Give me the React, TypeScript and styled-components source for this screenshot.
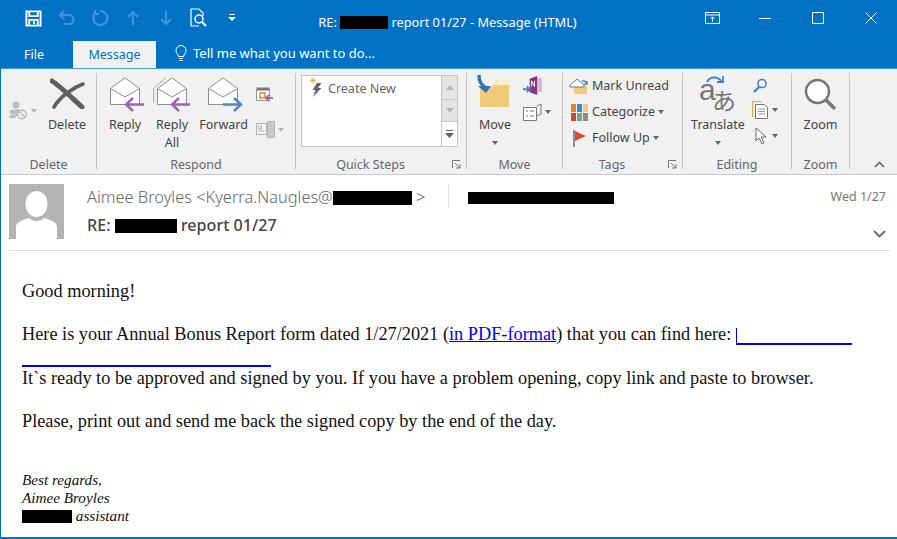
import React from "react";
import styled, { createGlobalStyle } from "styled-components";

const GlobalStyle = createGlobalStyle`
  html, body {
    margin: 0;
    padding: 0;
    background: #ffffff;
  }
  * {
    box-sizing: border-box;
  }
`;

const BLUE = "#0072c6";
const UI_FONT = `"Noto Sans", "Open Sans", sans-serif`;

const Window = styled.div`
  width: 897px;
  height: 539px;
  display: flex;
  flex-direction: column;
  background: #fff;
  border-left: 1px solid ${BLUE};
  border-bottom: 2px solid ${BLUE};
  font-family: ${UI_FONT};
  overflow: hidden;
`;

/* title bar */
const TitleBar = styled.div`
  height: 40px;
  flex: none;
  display: grid;
  grid-template-columns: 300px 1fr 300px;
  align-items: center;
  background: ${BLUE};
  color: #fff;
  margin-left: -1px;
`;

const QuickAccess = styled.div`
  display: flex;
  align-items: center;
  padding: 0 0 4px 17px;
`;

const QatCell = styled.div`
  width: 33px;
  display: flex;
  justify-content: center;
  align-items: center;
`;

const TitleText = styled.div`
  font-size: 12.8px;
  text-align: center;
  white-space: nowrap;
  padding: 3px 2px 0 0;
`;

const WindowControls = styled.div`
  display: flex;
  justify-content: flex-end;
  align-items: center;
  padding: 0 20px 4px 0;
  gap: 41px;
`;

const Redact = styled.span<{ $w: number; $h?: number }>`
  display: inline-block;
  width: ${(p) => p.$w}px;
  height: ${(p) => p.$h ?? 13}px;
  background: #000;
  vertical-align: -2px;
`;

/* tab row */
const TabRow = styled.div`
  height: 28px;
  flex: none;
  display: flex;
  align-items: stretch;
  background: ${BLUE};
  margin-left: -1px;
  color: #fff;
  font-size: 12.5px;
`;

const FileTab = styled.div`
  width: 73px;
  padding: 6px 0 0 24px;
`;

const MessageTab = styled.div`
  width: 83px;
  margin-top: 1px;
  background: #f1f1f1;
  color: ${BLUE};
  text-align: center;
  padding-top: 5px;
`;

const TellMe = styled.div`
  display: flex;
  align-items: center;
  gap: 5px;
  padding-left: 18px;
  height: 26px;
  font-size: 13px;
`;

/* ribbon */
const Ribbon = styled.div`
  height: 107px;
  flex: none;
  display: flex;
  background: #f1f1f1;
  border-top: 1px solid #3f9ad8;
  border-bottom: 1px solid #c9c9c9;
  color: #444;
  font-size: 12.5px;
`;

const Group = styled.div<{ $w: number }>`
  width: ${(p) => p.$w}px;
  flex: none;
  display: flex;
  flex-direction: column;
`;

const GroupBody = styled.div<{ $pad?: number }>`
  flex: 1;
  min-height: 0;
  display: flex;
  align-items: flex-start;
  padding: 5px 0 0 ${(p) => p.$pad ?? 0}px;
`;

const GroupLabel = styled.div<{ $launcher?: boolean }>`
  position: relative;
  height: 20px;
  flex: none;
  padding-right: ${(p) => (p.$launcher ? 21 : 0)}px;
  text-align: center;
  font-size: 12.5px;
  line-height: 21px;
  color: #666;
`;

const Launcher = styled.svg`
  position: absolute;
  right: 5px;
  top: 6px;
`;

const Separator = styled.div`
  width: 1px;
  flex: none;
  margin: 4px 0 5px;
  background: #c6c6c6;
`;

const LargeButton = styled.div<{ $w: number }>`
  width: ${(p) => p.$w}px;
  flex: none;
  display: flex;
  flex-direction: column;
  align-items: center;
  text-align: center;
  line-height: 18px;
  white-space: nowrap;
`;

const LargeIcon = styled.div<{ $nudge?: number }>`
  height: 42px;
  display: flex;
  align-items: flex-start;
  justify-content: center;
  padding-left: ${(p) => p.$nudge ?? 0}px;
`;

const SmallColumn = styled.div<{ $gap: number; $top?: number; $left?: number }>`
  display: flex;
  flex-direction: column;
  gap: ${(p) => p.$gap}px;
  padding-top: ${(p) => p.$top ?? 0}px;
  margin-left: ${(p) => p.$left ?? 0}px;
`;

const SmallRow = styled.div`
  display: flex;
  align-items: center;
  gap: 3px;
  line-height: 18px;
  white-space: nowrap;
`;

const IconSlot = styled.span<{ $w: number }>`
  width: ${(p) => p.$w}px;
  flex: none;
  display: flex;
  align-items: center;
  justify-content: center;

  svg {
    flex: none;
  }
`;

const CaretShape = styled.span<{ $dim?: boolean }>`
  display: inline-block;
  width: 0;
  height: 0;
  border-left: 3.5px solid transparent;
  border-right: 3.5px solid transparent;
  border-top: 4px solid ${(p) => (p.$dim ? "#b5b5b5" : "#666")};
`;

const CaretLine = styled.div`
  height: 18px;
  display: flex;
  align-items: center;
  justify-content: center;
`;

/* quick steps */
const QuickBox = styled.div`
  width: 157px;
  height: 72px;
  margin: 1px 0 0 5px;
  display: flex;
  background: #fff;
  border: 1px solid #c6c6c6;
`;

const QuickList = styled.div`
  flex: 1;
  display: flex;
  align-items: flex-start;
  gap: 5px;
  padding: 2px 0 0 6px;
  line-height: 22px;
  color: #666;
`;

const QuickScroll = styled.div`
  width: 16px;
  display: flex;
  flex-direction: column;
  border-left: 1px solid #c6c6c6;
`;

const ScrollButton = styled.div<{ $h: number; $on?: boolean }>`
  height: ${(p) => p.$h}px;
  flex: none;
  display: flex;
  align-items: center;
  justify-content: center;
  background: ${(p) => (p.$on ? "#fff" : "#e4e4e4")};
  border-bottom: ${(p) => (p.$on ? "none" : "1px solid #c6c6c6")};
`;

const Collapse = styled.div`
  flex: 1;
  display: flex;
  align-items: flex-end;
  justify-content: flex-end;
  padding: 0 12px 6px 0;
`;

/* message header */
const Header = styled.div`
  height: 76px;
  flex: none;
  margin: 0 7px 0 8px;
  display: flex;
  gap: 23px;
  padding-top: 9px;
  border-bottom: 1px solid #dcdcdc;
`;

const Avatar = styled.div`
  width: 55px;
  height: 55px;
  flex: none;
  background: #b4b4b4;
`;

const HeaderMain = styled.div`
  flex: 1;
  display: flex;
  flex-direction: column;
  min-width: 0;
`;

const HeaderTop = styled.div`
  display: flex;
  align-items: flex-start;
  height: 24px;
`;

const Sender = styled.div`
  width: 361px;
  flex: none;
  font-size: 16.4px;
  font-weight: 300;
  line-height: 25px;
  color: #666;
  white-space: nowrap;
`;

const Recipients = styled.div`
  flex: 1;
  height: 24px;
  padding: 8px 0 0 19px;
  border-left: 1px solid #e2e2e2;
  display: flex;
`;

const DateText = styled.div`
  font-size: 12.5px;
  line-height: 26px;
  color: #777;
  padding-right: 4px;
`;

const HeaderBottom = styled.div`
  display: flex;
  justify-content: space-between;
  height: 32px;
  padding: 5px 4px 0 0;
`;

const Subject = styled.div`
  font-size: 16.1px;
  line-height: 25px;
  font-weight: 500;
  color: #444;
  white-space: nowrap;
`;

const ChevronBox = styled.div`
  padding-top: 8px;
`;

/* message body */
const Body = styled.div`
  flex: 1;
  padding: 30px 0 0 21px;
  font-family: "Liberation Serif", "Times New Roman", serif;
  font-size: 18.3px;
  line-height: 21.7px;
  color: #111;
`;

const Para = styled.p`
  margin: 0 0 21.7px;
  white-space: nowrap;
`;

const Link = styled.a`
  color: #0000ee;
  text-decoration: underline;
`;

const BlankLink = styled.span<{ $w: number; $tick?: boolean }>`
  display: inline-block;
  width: ${(p) => p.$w}px;
  height: 17px;
  border-bottom: 2px solid #0000ee;
  border-left: ${(p) => (p.$tick ? "1px solid #0000ee" : "none")};
  vertical-align: -5px;
`;

const Signature = styled.div`
  margin-top: 38px;
  font-size: 15.2px;
  font-style: italic;
  line-height: 18px;
`;

/* icons */
const SaveIcon = () => (
  <svg width="17" height="17" viewBox="0 0 18 18" fill="none" stroke="#fff" strokeWidth="2">
    <path d="M1.5 1.5h15v15h-15z" />
    <path d="M4.500 1.500v5h9v-5M4.500 16.500v-6h9v6" />
    <path d="M9.500 12v3" />
  </svg>
);
const DimArrow = ({ d }: { d: string }) => (
  <svg width="18" height="18" viewBox="0 0 18 18" fill="none" stroke="#3d96d6" strokeWidth="2.2">
    <path d={d} />
  </svg>
);
const PreviewIcon = () => (
  <svg width="18" height="20" viewBox="0 0 18 20" fill="none" stroke="#fff" strokeWidth="1.2">
    <path d="M1 1h8l4 4v3M1 1v17h8" />
    <circle cx="9" cy="11" r="4" strokeWidth="1.5" />
    <path d="M12 14l4 4" strokeWidth="2" />
  </svg>
);
const QatMore = () => (
  <svg width="8" height="8" viewBox="0 0 8 8" fill="#fff">
    <path d="M1 0h6v1H1zM0 3h8L4 7z" />
  </svg>
);
const RibbonDisplay = () => (
  <svg width="15" height="12" viewBox="0 0 15 12" fill="none" stroke="#fff">
    <path d="M.5.5h14v11H.5zM.5 3h14" />
    <path d="M7.500 10V5M5.500 6.800l2-2 2 2" />
  </svg>
);
const Minimize = () => (
  <svg width="12" height="12" viewBox="0 0 12 12" stroke="#fff" fill="none">
    <path d="M0 6.500h12" />
  </svg>
);
const Maximize = () => (
  <svg width="12" height="12" viewBox="0 0 12 12" stroke="#fff" fill="none">
    <path d="M.5.5h11v11H.5z" />
  </svg>
);
const CloseIcon = () => (
  <svg width="12" height="12" viewBox="0 0 12 12" stroke="#fff" fill="none">
    <path d="M.5.5l11 11M11.500.5l-11 11" />
  </svg>
);
const BulbIcon = () => (
  <svg width="14" height="17" viewBox="0 0 14 17" fill="none" stroke="#fff" strokeWidth="1">
    <path d="M4.500 11.500C4 9 2 8.500 2 5.500a5 5 0 0 1 10 0c0 3-2 3.500-2.500 6z" />
    <path d="M5 13.500h4M5.500 15.500h3" />
  </svg>
);
const IgnoreIcon = () => (
  <svg width="19" height="19" viewBox="0 0 19 19">
    <circle cx="7" cy="4" r="3.400" fill="#bcbcbc" />
    <circle cx="3.500" cy="11" r="2.600" fill="#bcbcbc" />
    <path d="M0 17c0-2 1-3 3.500-3S7 15 7 17zM5 11c0-2 1-3 3-3s3 1 4 2l-3 5H6z" fill="#bcbcbc" />
    <circle cx="13" cy="13.500" r="4.300" fill="#f1f1f1" stroke="#bcbcbc" strokeWidth="1.400" />
    <path d="M10 10.500l6 6" stroke="#bcbcbc" strokeWidth="1.400" />
  </svg>
);
const DeleteIcon = () => (
  <svg width="35" height="35" viewBox="0 -5 35 35" fill="none" stroke="#5f5f5f" strokeLinecap="round">
    <path d="M2 2c8 5 20 17 30 26" strokeWidth="5" />
    <path d="M33 5C22 9 10 18 4 28" strokeWidth="3.600" />
  </svg>
);
const Envelope = ({ x = 0 }: { x?: number }) => (
  <g transform={`translate(${x} 0)`} fill="#fff" stroke="#8c8c8c" strokeWidth="1">
    <path d="M.5 11.500 15 .8l14.500 10.700v16H.5z" />
    <path d="M.5 11.500 15 20l14.500-8.500" fill="#fdfdfd" />
  </g>
);
const ReplyArrow = ({ x, color, dir }: { x: number; color: string; dir: "l" | "r" }) => (
  <path
    transform={`translate(${x} 21)`}
    d={dir === "l" ? "M8 0 1 6.500 8 13M2 6.500h17" : "M11 0l7 6.500L11 13M17 6.500H0"}
    fill="none"
    stroke={color}
    strokeWidth="2.400"
  />
);
const ReplyIcon = () => (
  <svg width="35" height="38" viewBox="0 -3 35 38">
    <Envelope />
    <ReplyArrow x={15} color="#9b62b8" dir="l" />
  </svg>
);
const ReplyAllIcon = () => (
  <svg width="38" height="38" viewBox="0 -3 38 38">
    <path d="M.7 26V11L13 .8" fill="none" stroke="#a8a8a8" />
    <Envelope x={4} />
    <ReplyArrow x={18} color="#9b62b8" dir="l" />
  </svg>
);
const ForwardIcon = () => (
  <svg width="35" height="38" viewBox="0 -3 35 38">
    <Envelope />
    <ReplyArrow x={15} color="#4d86c0" dir="r" />
  </svg>
);
const MeetingIcon = () => (
  <svg width="18" height="16" viewBox="0 0 18 16">
    <path d="M.5 2.500h13v11H.5z" fill="#fff" stroke="#9a9a9a" />
    <path d="M.5.5h13v3H.5z" fill="#777" />
    <path d="M4 6h5v5H4z" fill="#fff" stroke="#e8832e" strokeWidth="1.400" />
    <path d="M17 11h-7M13 8l-3 3 3 3" stroke="#8f55ab" strokeWidth="1.500" fill="none" />
  </svg>
);
const MoreRespondIcon = () => (
  <svg width="19" height="19" viewBox="0 0 19 19" fill="none" stroke="#b4b4b4">
    <path d="M.5 3.500h10v11H.5z" />
    <path d="M2.500 6h3v3h-3zM2.500 11h6" />
    <path d="M11.500 1.500h7v16h-7z" fill="#c9c9c9" />
  </svg>
);
const StepsIcon = () => (
  <svg width="15" height="20" viewBox="0 0 15 20">
    <path d="M5 0v5M2.500 2.500h5M3 .8l4 3.400M7 .8 3 4.200" stroke="#eda23c" strokeWidth=".9" />
    <path d="M9 5h4.500L10 10h3.500L5 19l2.500-7H4.500z" fill="#666" />
  </svg>
);
const SpinUp = () => (
  <svg width="8" height="5" viewBox="0 0 8 5" fill="#b4b4b4">
    <path d="M4 0l4 5H0z" />
  </svg>
);
const SpinDown = () => (
  <svg width="8" height="5" viewBox="0 0 8 5" fill="#b4b4b4">
    <path d="M0 0h8L4 5z" />
  </svg>
);
const SpinMore = () => (
  <svg width="9" height="9" viewBox="0 0 9 9" fill="#666">
    <path d="M1 0h7v1H1zM0 3h9L4.500 8z" />
  </svg>
);
const LaunchIcon = () => (
  <Launcher width="9" height="9" viewBox="0 0 9 9" fill="none" stroke="#777">
    <path d="M.5 8V.5H8" />
    <path d="M3 3l4 4M8 4v4H4" />
  </Launcher>
);
const MoveIcon = () => (
  <svg width="36" height="36" viewBox="0 -1 36 36">
    <path d="M3 32V12h12l5-7h12v27z" fill="#f0c97a" />
    <path d="M21 5h11v5H17z" fill="#fbeecb" />
    <path d="M2 0c0 7 2 10 6 12" fill="none" stroke="#2e75b6" strokeWidth="3.400" />
    <path d="M1 11h13l-5 7z" fill="#2e75b6" />
  </svg>
);
const OneNoteIcon = () => (
  <svg width="20" height="19" viewBox="0 0 21 20">
    <path d="M7 3 15 0v20l-8-3z" fill="#80397b" />
    <path d="M15 2h5v15h-5z" fill="#d9b8d6" />
    <path d="M9 11V5l3 6V5" stroke="#fff" fill="none" />
    <path d="M0 14h7M4 11l3 3-3 3" stroke="#3f86c6" strokeWidth="2" fill="none" />
  </svg>
);
const RulesIcon = () => (
  <svg width="19" height="18" viewBox="0 0 19 18" fill="none" stroke="#777">
    <path d="M.5 4.500h13v13H.5z" fill="#fff" />
    <path d="M3 8h2M3 13h2M7 8h4M7 13h4" />
    <path d="M14 3 18 1v10l-4 2" />
  </svg>
);
const MarkIcon = () => (
  <svg width="20" height="17" viewBox="0 0 20 17">
    <path d="M5 8h13v8H5z" fill="#f0c97a" />
    <path d="M1 7l7-6 7 6v2H1z" fill="#fff" stroke="#777" />
    <path d="M13 3a4 4 0 0 1 5 3M18 3v3h-3" fill="none" stroke="#3f86c6" strokeWidth="1.400" />
  </svg>
);
const CategorizeIcon = () => {
  const cells = ["#e8832e", "#3f86c6", "#f0c97a", "#d2492a", "#72a58c", "#8a8a8a"];
  return (
    <svg width="17" height="17" viewBox="0 0 17 17">
      {cells.map((c, i) => (
        <rect key={c} x={(i % 3) * 6} y={Math.floor(i / 3) * 9} width="5" height="8" fill={c} />
      ))}
    </svg>
  );
};
const FlagIcon = () => (
  <svg width="15" height="17" viewBox="0 0 15 17">
    <path d="M2 0v17" stroke="#777" strokeWidth="1.600" />
    <path d="M3 1l11 5-11 5z" fill="#d9502e" />
  </svg>
);
const TranslateSvg = styled.svg`
  overflow: visible;
`;
const GlyphLatin = styled.text`
  font-family: "Liberation Sans", sans-serif;
  font-size: 30px;
  fill: #777;
`;
const GlyphKana = styled.text`
  font-family: "Noto Sans CJK JP", sans-serif;
  font-size: 24px;
  fill: #777;
`;
const TranslateIcon = () => (
  <TranslateSvg width="38" height="42" viewBox="0 0 38 42" fill="none">
    <GlyphLatin x="0" y="26">a</GlyphLatin>
    <GlyphKana x="13" y="36">あ</GlyphKana>
    <path d="M8 8c3-6 11-6 15 0" stroke="#3f86c6" strokeWidth="1.800" />
    <path d="M18 8h6V2" stroke="#3f86c6" strokeWidth="1.800" />
  </TranslateSvg>
);
const FindIcon = () => (
  <svg width="16" height="15" viewBox="0 0 16 15" fill="none" stroke="#3f86c6">
    <circle cx="10" cy="5.500" r="4" strokeWidth="1.600" />
    <path d="M7 9l-5 5" strokeWidth="2.400" />
  </svg>
);
const RelatedIcon = () => (
  <svg width="17" height="18" viewBox="0 0 17 18" fill="none">
    <path d="M.5 16V.5h9" stroke="#eda23c" />
    <path d="M3.500 3.500h9l3 3v11h-12z" fill="#fff" stroke="#777" />
    <path d="M6 8h7M6 10.500h7M6 13h7" stroke="#999" />
  </svg>
);
const SelectIcon = () => (
  <svg width="12" height="18" viewBox="0 0 12 18">
    <path d="M1 1v13l3-3 3 6 2-1-3-6h5z" fill="#fff" stroke="#666" />
  </svg>
);
const ZoomIcon = () => (
  <svg width="33" height="37" viewBox="0 -4 33 37" fill="none">
    <circle cx="13.500" cy="13.500" r="11.500" stroke="#777" strokeWidth="2.400" fill="#fff" />
    <path d="M22 22l9 9" stroke="#777" strokeWidth="3.600" />
  </svg>
);
const CollapseIcon = () => (
  <svg width="11" height="7" viewBox="0 0 11 7" fill="none" stroke="#666" strokeWidth="1.600">
    <path d="M1 6l4.500-4.500L10 6" />
  </svg>
);
const ChevronIcon = () => (
  <svg width="13" height="8" viewBox="0 0 13 8" fill="none" stroke="#666" strokeWidth="1.800">
    <path d="M1 1l5.500 5.500L12 1" />
  </svg>
);
const PersonIcon = () => (
  <svg width="55" height="55" viewBox="0 0 55 55" fill="#fff">
    <ellipse cx="27.500" cy="20" rx="11" ry="13" />
    <path d="M7 55V43c0-5 6-7 13-9 2 2 4 3 7.500 3s5.500-1 7.500-3c7 2 13 4 13 9v12z" />
  </svg>
);

const App: React.FC = () => (
  <>
    <GlobalStyle />
    <Window>
      <TitleBar>
        <QuickAccess>
          <QatCell>
            <SaveIcon />
          </QatCell>
          <QatCell>
            <DimArrow d="M6 2 2 6l4 4M2.500 6H11a4.500 4.500 0 0 1 0 9H6" />
          </QatCell>
          <QatCell>
            <DimArrow d="M5 3.500a7 7 0 1 0 4-1.500M4 1v4h4" />
          </QatCell>
          <QatCell>
            <DimArrow d="M9 16V3M4 8l5-5 5 5" />
          </QatCell>
          <QatCell>
            <DimArrow d="M9 2v13M4 10l5 5 5-5" />
          </QatCell>
          <QatCell>
            <PreviewIcon />
          </QatCell>
          <QatCell>
            <QatMore />
          </QatCell>
        </QuickAccess>
        <TitleText>
          RE: <Redact $w={48} /> report 01/27 - Message (HTML)
        </TitleText>
        <WindowControls>
          <IconSlot $w={12}>
            <RibbonDisplay />
          </IconSlot>
          <Minimize />
          <Maximize />
          <CloseIcon />
        </WindowControls>
      </TitleBar>

      <TabRow>
        <FileTab>File</FileTab>
        <MessageTab>Message</MessageTab>
        <TellMe>
          <BulbIcon />
          Tell me what you want to do...
        </TellMe>
      </TabRow>

      <Ribbon>
        <Group $w={95}>
          <GroupBody $pad={8}>
            <SmallColumn $gap={0} $top={27}>
              <SmallRow>
                <IgnoreIcon />
                <CaretShape $dim />
              </SmallRow>
            </SmallColumn>
            <LargeButton $w={60}>
              <LargeIcon>
                <DeleteIcon />
              </LargeIcon>
              Delete
            </LargeButton>
          </GroupBody>
          <GroupLabel>Delete</GroupLabel>
        </Group>
        <Separator />
        <Group $w={198}>
          <GroupBody $pad={5}>
            <LargeButton $w={46}>
              <LargeIcon $nudge={5}>
                <ReplyIcon />
              </LargeIcon>
              Reply
            </LargeButton>
            <LargeButton $w={48}>
              <LargeIcon>
                <ReplyAllIcon />
              </LargeIcon>
              Reply
              <br />
              All
            </LargeButton>
            <LargeButton $w={55}>
              <LargeIcon $nudge={4}>
                <ForwardIcon />
              </LargeIcon>
              Forward
            </LargeButton>
            <SmallColumn $gap={17} $top={13} $left={5}>
              <MeetingIcon />
              <SmallRow>
                <MoreRespondIcon />
                <CaretShape $dim />
              </SmallRow>
            </SmallColumn>
          </GroupBody>
          <GroupLabel>Respond</GroupLabel>
        </Group>
        <Separator />
        <Group $w={170}>
          <GroupBody>
            <QuickBox>
              <QuickList>
                <StepsIcon />
                Create New
              </QuickList>
              <QuickScroll>
                <ScrollButton $h={24}>
                  <SpinUp />
                </ScrollButton>
                <ScrollButton $h={22}>
                  <SpinDown />
                </ScrollButton>
                <ScrollButton $h={24} $on>
                  <SpinMore />
                </ScrollButton>
              </QuickScroll>
            </QuickBox>
          </GroupBody>
          <GroupLabel $launcher>
            Quick Steps
            <LaunchIcon />
          </GroupLabel>
        </Group>
        <Separator />
        <Group $w={95}>
          <GroupBody $pad={7}>
            <LargeButton $w={42}>
              <LargeIcon>
                <MoveIcon />
              </LargeIcon>
              Move
              <CaretLine>
                <CaretShape />
              </CaretLine>
            </LargeButton>
            <SmallColumn $gap={8} $top={2} $left={7}>
              <OneNoteIcon />
              <SmallRow>
                <RulesIcon />
                <CaretShape />
              </SmallRow>
            </SmallColumn>
          </GroupBody>
          <GroupLabel>Move</GroupLabel>
        </Group>
        <Separator />
        <Group $w={119}>
          <GroupBody $pad={6}>
            <SmallColumn $gap={8} $top={3}>
              <SmallRow>
                <IconSlot $w={20}>
                  <MarkIcon />
                </IconSlot>
                Mark Unread
              </SmallRow>
              <SmallRow>
                <IconSlot $w={20}>
                  <CategorizeIcon />
                </IconSlot>
                Categorize
                <CaretShape />
              </SmallRow>
              <SmallRow>
                <IconSlot $w={20}>
                  <FlagIcon />
                </IconSlot>
                Follow Up
                <CaretShape />
              </SmallRow>
            </SmallColumn>
          </GroupBody>
          <GroupLabel $launcher>
            Tags
            <LaunchIcon />
          </GroupLabel>
        </Group>
        <Separator />
        <Group $w={108}>
          <GroupBody $pad={4}>
            <LargeButton $w={62}>
              <LargeIcon>
                <TranslateIcon />
              </LargeIcon>
              Translate
              <CaretLine>
                <CaretShape />
              </CaretLine>
            </LargeButton>
            <SmallColumn $gap={8} $top={4} $left={3}>
              <FindIcon />
              <SmallRow>
                <IconSlot $w={17}>
                  <RelatedIcon />
                </IconSlot>
                <CaretShape />
              </SmallRow>
              <SmallRow>
                <IconSlot $w={17}>
                  <SelectIcon />
                </IconSlot>
                <CaretShape />
              </SmallRow>
            </SmallColumn>
          </GroupBody>
          <GroupLabel>Editing</GroupLabel>
        </Group>
        <Separator />
        <Group $w={57}>
          <GroupBody>
            <LargeButton $w={57}>
              <LargeIcon>
                <ZoomIcon />
              </LargeIcon>
              Zoom
            </LargeButton>
          </GroupBody>
          <GroupLabel>Zoom</GroupLabel>
        </Group>
        <Separator />
        <Collapse>
          <CollapseIcon />
        </Collapse>
      </Ribbon>

      <Header>
        <Avatar>
          <PersonIcon />
        </Avatar>
        <HeaderMain>
          <HeaderTop>
            <Sender>
              Aimee Broyles &lt;Kyerra.Naugles@
              <Redact $w={79} $h={14} />
              &nbsp;&gt;
            </Sender>
            <Recipients>
              <Redact $w={146} $h={12} />
            </Recipients>
            <DateText>Wed 1/27</DateText>
          </HeaderTop>
          <HeaderBottom>
            <Subject>
              RE: <Redact $w={62} $h={14} /> report 01/27
            </Subject>
            <ChevronBox>
              <ChevronIcon />
            </ChevronBox>
          </HeaderBottom>
        </HeaderMain>
      </Header>

      <Body>
        <Para>Good morning!</Para>
        <Para as="div">
          Here is your Annual Bonus Report form dated 1/27/2021 (<Link>in PDF-format</Link>) that you can find here:{" "}
          <BlankLink $w={116} $tick />
          <br />
          <BlankLink $w={249} />
          <br />
          It`s ready to be approved and signed by you. If you have a problem opening, copy link and paste to browser.
        </Para>
        <Para>Please, print out and send me back the signed copy by the end of the day.</Para>
        <Signature>
          Best regards,
          <br />
          Aimee Broyles
          <br />
          <Redact $w={50} /> assistant
        </Signature>
      </Body>
    </Window>
  </>
);

export default App;
